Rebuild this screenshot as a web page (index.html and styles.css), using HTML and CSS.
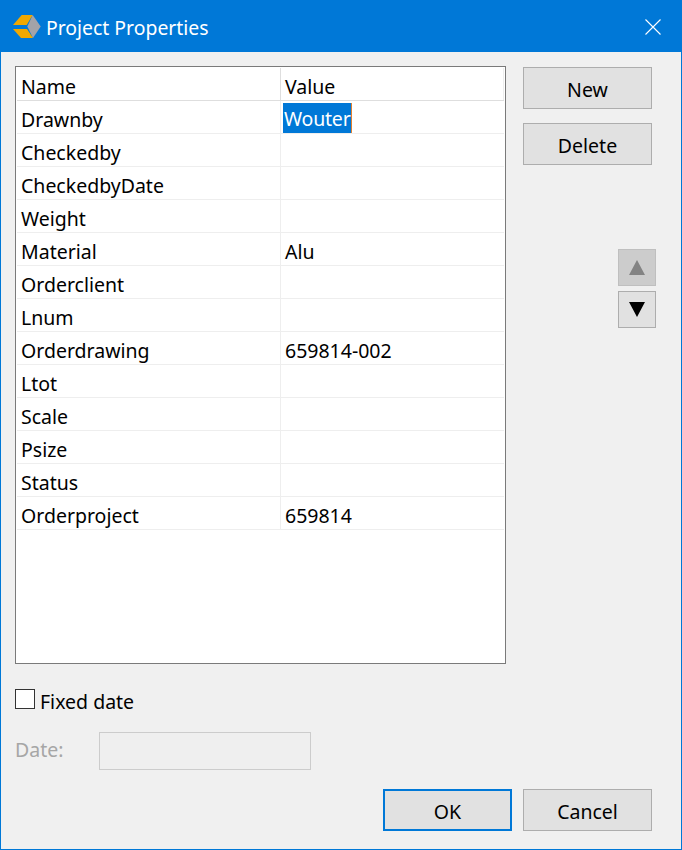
FILE: index.html
```html
<!DOCTYPE html>
<html lang="en">
<head>
<meta charset="utf-8">
<title>Project Properties</title>
<link rel="stylesheet" href="styles.css">
</head>
<body>
<div class="window">
  <header class="titlebar">
    <svg class="logo" width="28" height="24" viewBox="0 0 28 24">
      <polygon points="0,10 8.7,0 19.7,0 13.7,10" fill="#f0a800"/>
      <polygon points="0,14 14,14 20,23 8,23" fill="#f0a800"/>
      <polygon points="19.7,0 27.7,11.5 20,23 14.3,11.5" fill="#a3a3a8"/>
    </svg>
    <span class="title">Project Properties</span>
    <svg class="close" width="16" height="16" viewBox="0 0 16 16"><path d="M0.5 0.5L15.5 15.5M15.5 0.5L0.5 15.5" stroke="#fff" stroke-width="1.1" fill="none"/></svg>
  </header>
  <main class="content">
    <div class="top">
      <div class="grid-box">
        <div class="row head"><div class="cell name">Name</div><div class="cell value">Value</div></div>
        <div class="row"><div class="cell name">Drawnby</div><div class="cell value"><span class="selected">Wouter</span></div></div>
        <div class="row"><div class="cell name">Checkedby</div><div class="cell value"></div></div>
        <div class="row"><div class="cell name">CheckedbyDate</div><div class="cell value"></div></div>
        <div class="row"><div class="cell name">Weight</div><div class="cell value"></div></div>
        <div class="row"><div class="cell name">Material</div><div class="cell value">Alu</div></div>
        <div class="row"><div class="cell name">Orderclient</div><div class="cell value"></div></div>
        <div class="row"><div class="cell name">Lnum</div><div class="cell value"></div></div>
        <div class="row"><div class="cell name">Orderdrawing</div><div class="cell value">659814-002</div></div>
        <div class="row"><div class="cell name">Ltot</div><div class="cell value"></div></div>
        <div class="row"><div class="cell name">Scale</div><div class="cell value"></div></div>
        <div class="row"><div class="cell name">Psize</div><div class="cell value"></div></div>
        <div class="row"><div class="cell name">Status</div><div class="cell value"></div></div>
        <div class="row"><div class="cell name">Orderproject</div><div class="cell value">659814</div></div>
      </div>
      <aside class="side">
        <button class="btn" type="button">New</button>
        <button class="btn" type="button">Delete</button>
        <div class="arrows">
          <button class="arrow disabled" type="button"><svg width="16" height="15" viewBox="0 0 16 15"><polygon points="8,0 16,15 0,15" fill="#838383"/></svg></button>
          <button class="arrow" type="button"><svg width="16" height="15" viewBox="0 0 16 15"><polygon points="0,0 16,0 8,15" fill="#000"/></svg></button>
        </div>
      </aside>
    </div>
    <label class="check"><span class="box"></span><span class="check-text">Fixed date</span></label>
    <div class="date"><span class="date-label">Date:</span><span class="date-input"></span></div>
    <div class="actions">
      <button class="btn primary" type="button">OK</button>
      <button class="btn" type="button">Cancel</button>
    </div>
  </main>
</div>
</body>
</html>
```
FILE: styles.css
```css
* { box-sizing: border-box; }
html, body { margin: 0; padding: 0; }
body { width: 682px; height: 850px; overflow: hidden; font-family: "Noto Sans", "Open Sans", sans-serif; font-size: 19.5px; color: #000; background: #f0f0f0; }
.window { width: 682px; height: 850px; border: 1px solid #0078d7; display: flex; flex-direction: column; background: #f0f0f0; }
.titlebar { height: 51px; background: #0078d7; color: #fff; display: flex; align-items: center; padding-left: 12px; flex: none; }
.logo { flex: none; }
.title { margin-left: 5px; margin-top: 2px; font-size: 19.4px; flex: 1; }
.close { margin-right: 20px; flex: none; }
.content { flex: 1; padding: 14px 0 0 14px; display: flex; flex-direction: column; }
.top { display: flex; align-items: flex-start; }
.grid-box { width: 491px; height: 598px; background: #fff; border: 1px solid #7a7a7a; padding: 1px 1px 0 1px; flex: none; }
.row { display: flex; height: 33px; border-bottom: 1px solid #eeeeee; }
.row.head { height: 33px; border-bottom: 1px solid #dedede; }
.cell { line-height: 33px; padding-top: 2px; white-space: nowrap; }
.name { width: 263px; padding-left: 4px; flex: none; }
.value { width: 224px; border-left: 1px solid #eeeeee; padding-left: 4px; flex: none; }
.head .value { border-right: 1px solid #eeeeee; border-left-color: #dedede; }
.selected { display: block; width: 69px; background: #0078d7; color: #fff; line-height: 32px; height: 30px; margin-left: -2px; padding-left: 1px; letter-spacing: -0.2px; border-right: 1px solid #e08030; overflow: hidden; }
.side { margin-left: 17px; padding-top: 1px; width: 133px; display: flex; flex-direction: column; align-items: flex-start; }
.btn { width: 129px; height: 42px; background: #e1e1e1; border: 1px solid #adadad; font: inherit; color: #000; padding: 2px 0 0; margin: 0; }
.side .btn + .btn { margin-top: 14px; }
.arrows { margin-top: 84px; margin-left: 95px; display: flex; flex-direction: column; gap: 5px; }
.arrow { width: 38px; height: 37px; background: #e1e1e1; border: 1px solid #adadad; padding: 0; display: flex; align-items: center; justify-content: center; }
.arrow.disabled { background: #cccccc; border-color: #bfbfbf; }
.check { display: flex; align-items: center; margin-top: 25px; height: 20px; }
.check-text { padding-top: 4px; }
.box { width: 20px; height: 20px; background: #fff; border: 1px solid #333; margin-right: 5px; flex: none; }
.date { display: flex; align-items: center; margin-top: 23px; height: 38px; }
.date-label { width: 84px; color: #a6a6a6; margin-top: -3px; }
.date-input { width: 212px; height: 38px; border: 1px solid #cccccc; background: #efefef; }
.actions { display: flex; justify-content: flex-start; margin-top: 19px; margin-left: 368px; gap: 11px; }
.primary { border: 2px solid #0078d7; }
```
